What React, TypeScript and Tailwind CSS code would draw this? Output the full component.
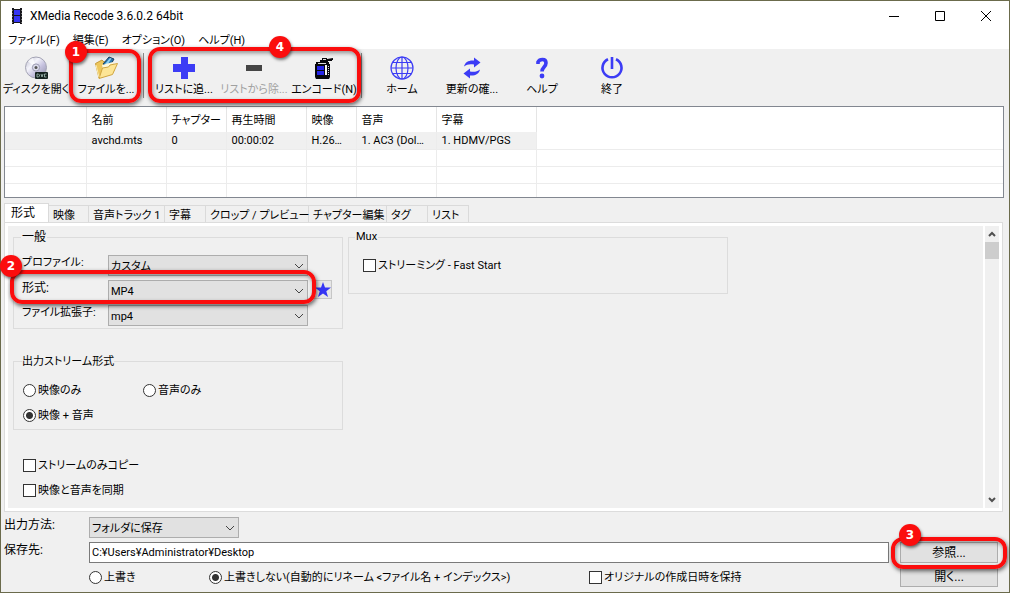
import { useState } from "react";
import type { ReactNode } from "react";

const COLUMNS = [
  { label: "", value: "" },
  { label: "名前", value: "avchd.mts" },
  { label: "チャプター", value: "0" },
  { label: "再生時間", value: "00:00:02" },
  { label: "映像", value: "H.26…" },
  { label: "音声", value: "1. AC3 (Dol…" },
  { label: "字幕", value: "1. HDMV/PGS" },
];

const TABS = [
  { label: "形式", width: "w-[45px]" },
  { label: "映像", width: "w-10" },
  { label: "音声トラック 1", width: "w-[76px]" },
  { label: "字幕", width: "w-[41px]" },
  { label: "クロップ / プレビュー", width: "w-[103px]" },
  { label: "チャプター編集", width: "w-[78px]" },
  { label: "タグ", width: "w-[41px]" },
  { label: "リスト", width: "w-[41px]" },
];

const MENU = ["ファイル(F)", "編集(E)", "オプション(O)", "ヘルプ(H)"];

/* ── Icons ── */
const FilmIcon = () => (
  <svg width="12" height="16" viewBox="0 0 12 16">
    <path d="M1 0h2v1h6V0h2v16H9v-1H3v1H1z" fill="#16161c" />
    <path d="M3 2h6v5H3zM3 8h6v6H3z" fill="#3434f4" />
    <path d="M1 2h1v1H1zM1 5h1v1H1zM1 8h1v1H1zM1 11h1v1H1zM1 14h1v1H1zM10 2h1v1h-1zM10 5h1v1h-1zM10 8h1v1h-1zM10 11h1v1h-1zM10 14h1v1h-1z" fill="#777" />
  </svg>
);

const DiscIcon = () => (
  <svg width="24" height="24" viewBox="0 0 24 24">
    <defs>
      <linearGradient id="disc" x1="0" y1="0" x2="1" y2="1">
        <stop offset="0" stopColor="#b9b9ca" />
        <stop offset="0.35" stopColor="#f4f4fb" />
        <stop offset="0.6" stopColor="#c6c2df" />
        <stop offset="1" stopColor="#8f8fa6" />
      </linearGradient>
    </defs>
    <circle cx="12" cy="11.5" r="10.5" fill="url(#disc)" stroke="#a3a3b4" />
    <path d="M12 11.5 4 5.500A10 10 0 0 1 9 2z" fill="#fff" opacity=".7" />
    <circle cx="12" cy="11.500" r="3.600" fill="#dcdcec" stroke="#9a9ab0" />
    <circle cx="12" cy="11.500" r="1.500" fill="#555" />
    <rect x="11" y="16" width="13" height="7" rx="1" fill="#15221f" />
    <path d="M13 18v3h1.500l1-1v-1l-1-1zM17 18l1 3 1-3M22.500 18h-2v3h2" fill="none" stroke="#a8c4bc" strokeWidth=".8" />
  </svg>
);

const FolderIcon = () => (
  <svg width="24" height="24" viewBox="0 0 24 24">
    <path d="M1.500 7.500 8 4l2 2 8-2 2 11-15 7z" fill="#edc65c" stroke="#c79a37" />
    <path d="m9 8 6-7 5 2-5 9z" fill="#2876ad" stroke="#173f62" />
    <path d="m11 8 5-6 1.500.6-4.500 7z" fill="#8fd0f4" />
    <path d="m8 9 11-3 1 8-10 4z" fill="#fff8db" />
    <path d="M5 22.500 8.500 12l6-1 1.500-2 7.500-1.500-5 11z" fill="#fde595" stroke="#d0a540" />
    <path d="m2 9 3 12" stroke="#fff0b4" />
  </svg>
);

const PlusIcon = () => (
  <svg width="24" height="24" viewBox="0 0 24 24">
    <path d="M9 1h7v7h7v8h-7v7H9v-7H1V8h8z" fill="#3c3cf5" />
  </svg>
);

const MinusIcon = () => (
  <svg width="24" height="24" viewBox="0 0 24 24">
    <path d="M4 9h16v6H4z" fill="#454545" />
  </svg>
);

const EncodeIcon = () => (
  <svg width="24" height="24" viewBox="0 0 24 24">
    <path d="M4 6h4V4h2V2h5v1l6-1v2h-1v1h-4v1h1v2h1v13l-1 2H4l-1-2V8h1z" fill="#08080c" />
    <path d="M11 3h3v1h-3zM6 7h8v1H6z" fill="#ddd" />
    <path d="M5 10h7v9H5z" fill="#2525e8" />
    <path d="M5 14h7v1H5z" fill="#08080c" />
    <path d="M13 9h2v10h-2z" fill="#f7f7f7" />
    <path d="M16 10h1v1h-1zM16 12h1v1h-1zM16 14h1v1h-1zM16 16h1v1h-1zM16 18h1v1h-1z" fill="#ddd" />
  </svg>
);

const GlobeIcon = () => (
  <svg width="24" height="24" viewBox="0 0 24 24" fill="none" stroke="#3c3cf5" strokeWidth="1.2">
    <circle cx="12" cy="12" r="11" />
    <ellipse cx="12" cy="12" rx="6" ry="11" />
    <path d="M12 1v22M1 12h22M3 6.500h18M3 17.500h18" />
  </svg>
);

const RefreshIcon = () => (
  <svg width="24" height="24" viewBox="0 0 24 24" fill="#3c3cf5">
    <path d="M4 10.500C5 6 9 4 14 4.500V1.500l6.500 5-6.500 5V8.500c-4-.8-7-.3-10 2z" />
    <path d="M20 13.500c-1 4.500-5 6.500-10 6v3l-6.500-5 6.500-5v3c4 .8 7 .3 10-2z" />
  </svg>
);

const HelpIcon = () => (
  <svg width="24" height="24" viewBox="0 0 24 24">
    <path d="M8 8V6c1-2 2.500-2.500 4.500-2.500C15 3.500 16 5 16 7c0 4-4 4-4 8.500" fill="none" stroke="#3c3cf5" strokeWidth="3.600" />
    <circle cx="12" cy="20" r="2.400" fill="#3c3cf5" />
  </svg>
);

const PowerIcon = () => (
  <svg width="24" height="24" viewBox="0 0 24 24" fill="none" stroke="#3c3cf5" strokeWidth="2.600">
    <path d="M8 3.200a9.500 9.500 0 1 0 8 0M12 1v12" />
  </svg>
);

const Chevron = ({ className }: { className: string }) => (
  <svg width="10" height="6" viewBox="0 0 10 6" className={className}>
    <path d="m1 1 4 4 4-4" fill="none" stroke="currentColor" />
  </svg>
);

const ScrollArrow = ({ className }: { className?: string }) => (
  <svg width="8" height="6" viewBox="0 0 8 6" className={className}>
    <path d="m1 1 3 3 3-3" fill="none" stroke="#505050" strokeWidth="2" />
  </svg>
);

/* ── Numbered red frame laid over the controls ── */
const Callout = ({ n, frame, badge }: { n: number; frame: string; badge: string }) => (
  <div className={`pointer-events-none absolute z-20 rounded-xl border-4 border-[#fb0d0d] shadow-[1px_2px_4px_rgba(0,0,0,0.6),inset_1px_2px_4px_rgba(0,0,0,0.4)] ${frame}`}>
    <span className={`absolute flex h-[22px] w-[22px] items-center justify-center rounded-full bg-[#fb0d0d] font-['DejaVu_Sans',sans-serif] text-xs font-bold text-white shadow-[1px_2px_3px_rgba(0,0,0,0.5)] ${badge}`}>
      {n}
    </span>
  </div>
);

const ToolButton = ({ label, disabled, children }: { label: string; disabled?: boolean; children: ReactNode }) => (
  <button
    type="button"
    disabled={disabled}
    className="flex w-[70px] flex-col items-center whitespace-nowrap pt-[7px] leading-5 disabled:text-[#a0a0a0]"
  >
    {children}
    <span>{label}</span>
  </button>
);

const Separator = () => (
  <div className="flex w-2 justify-start pb-2 pl-[2px] pt-1">
    <div className="w-px bg-[#8b8b8b]" />
  </div>
);

const Dropdown = ({ id, value, className }: { id: string; value: string; className?: string }) => (
  <div className={`relative ${className ?? ""}`}>
    <select
      id={id}
      defaultValue={value}
      className="block h-[21px] w-full appearance-none border border-[#adadad] bg-[#e1e1e1] pl-[2px] pt-[2px] leading-4"
    >
      <option>{value}</option>
    </select>
    <Chevron className="pointer-events-none absolute right-1 top-2 text-[#444]" />
  </div>
);

const Radio = ({ name, label, checked, className }: { name: string; label: string; checked?: boolean; className?: string }) => (
  <label className={`flex h-4 items-center gap-[2px] whitespace-nowrap ${className ?? ""}`}>
    <input
      type="radio"
      name={name}
      defaultChecked={checked}
      className="h-[13px] w-[13px] shrink-0 appearance-none rounded-full border border-[#333] bg-white checked:bg-[radial-gradient(circle,#333_0_3px,#fff_4px)]"
    />
    <span className="pt-[2px]">{label}</span>
  </label>
);

const Check = ({ label }: { label: string }) => (
  <label className="flex h-4 items-center gap-[2px] whitespace-nowrap">
    <input
      type="checkbox"
      className="h-[13px] w-[13px] shrink-0 appearance-none border border-[#333] bg-white checked:bg-[#333]"
    />
    <span className="pt-[2px]">{label}</span>
  </label>
);

const FileList = () => (
  <div className="ml-[3px] mr-[5px] h-[92px] overflow-hidden border border-[#828790] bg-white">
    <table className="w-full table-fixed border-collapse text-left">
      <colgroup>
        <col className="w-[81px]" />
        <col className="w-20" />
        <col className="w-[60px]" />
        <col className="w-20" />
        <col className="w-[50px]" />
        <col className="w-20" />
        <col className="w-[100px]" />
        <col />
      </colgroup>
      <thead>
        <tr className="h-[25px]">
          {COLUMNS.map((c) => (
            <th key={c.label} className="whitespace-nowrap border-r border-[#e5e5e5] pl-[5px] pt-[3px] font-normal">{c.label}</th>
          ))}
          <td />
        </tr>
      </thead>
      <tbody>
        <tr className="h-[17px] leading-[14px]">
          {COLUMNS.map((c) => (
            <td key={c.label} className="overflow-hidden whitespace-nowrap border-r border-b border-[#ececec] bg-[#f0f0f0] pl-[5px] pt-[2px]">{c.value}</td>
          ))}
          <td className="border-b border-[#ececec]" />
        </tr>
        {[1, 2, 3].map((row) => (
          <tr key={row} className="h-[17px]">
            {COLUMNS.map((c) => (
              <td key={c.label} className="border-r border-b border-[#ececec]" />
            ))}
            <td className="border-b border-[#ececec]" />
          </tr>
        ))}
      </tbody>
    </table>
  </div>
);

const FormatPanel = () => (
  <div className="flex min-w-0 flex-1 items-start gap-[5px] pl-[5px] pt-[3px]">
    <div className="w-[330px] shrink-0">
      <fieldset className="border border-[#dcdcdc] px-2 pb-[2px]">
        <legend className="-ml-px px-[1px] text-xs leading-4">一般</legend>
        <div className="grid grid-cols-[86px_200px_1fr] gap-y-1 pt-[10px]">
          <label htmlFor="profile" className="leading-4">プロファイル:</label>
          <Dropdown id="profile" value="カスタム" />
          <span />
          <div className="relative col-span-3 grid grid-cols-subgrid">
            <label htmlFor="format" className="text-xs leading-4">形式:</label>
            <Dropdown id="format" value="MP4" />
            <button type="button" aria-label="お気に入り" className="ml-[6px] flex h-[19px] w-[18px] items-center justify-center border border-[#c6c6c6] bg-[#e6e6e6]">
              <svg width="16" height="16" viewBox="0 0 16 16">
                <path d="m8 0 2 5.500h6l-4.700 3.700L13 15l-5-3.500L3 15l1.700-5.800L0 5.500h6z" fill="#3434f4" />
              </svg>
            </button>
            <Callout n={2} frame="-top-[10px] -bottom-[3px] -left-3 w-[306px]" badge="-left-[14px] -top-[19px]" />
          </div>
          <label htmlFor="extension" className="leading-4">ファイル拡張子:</label>
          <Dropdown id="extension" value="mp4" />
        </div>
      </fieldset>

      <fieldset className="mt-6 border border-[#dcdcdc] px-[9px] pb-[6px]">
        <legend className="-ml-px pt-px leading-4">出力ストリーム形式</legend>
        <div className="grid grid-cols-[120px_1fr] gap-y-[9px] pt-3 leading-4">
          <Radio name="stream" label="映像のみ" />
          <Radio name="stream" label="音声のみ" />
          <Radio name="stream" label="映像 + 音声" checked />
        </div>
      </fieldset>

      <div className="mt-[27px] flex flex-col gap-[9px] pl-[10px] leading-4">
        <Check label="ストリームのみコピー" />
        <Check label="映像と音声を同期" />
      </div>
    </div>

    <fieldset className="w-[380px] border border-[#dcdcdc] px-[14px] pb-5">
      <legend className="-ml-2 px-[1px] leading-4">Mux</legend>
      <div className="pt-3 leading-4">
        <Check label="ストリーミング - Fast Start" />
      </div>
    </fieldset>
  </div>
);

const OutputBar = () => (
  <div className="grid grid-cols-[85px_1fr_98px] gap-y-1 pb-[5px] pl-[3px] pr-[11px] pt-[6px] leading-4">
    <label htmlFor="output" className="text-xs">出力方法:</label>
    <Dropdown id="output" value="フォルダに保存" className="w-[150px]" />
    <span />

    <label htmlFor="folder" className="text-xs">保存先:</label>
    <input
      id="folder"
      type="text"
      defaultValue="C:¥Users¥Administrator¥Desktop"
      className="mr-[11px] h-[21px] min-w-0 border border-[#7a7a7a] bg-white px-[2px]"
    />
    <div className="relative">
      <button type="button" className="h-[21px] w-full border border-[#adadad] bg-[#e1e1e1] text-xs">参照...</button>
      <Callout n={3} frame="-top-[5px] -bottom-[6px] -left-[9px] -right-[9px]" badge="left-[4px] -top-[17px]" />
    </div>

    <span />
    <div className="flex items-center">
      <Radio name="overwrite" label="上書き" className="w-[120px]" />
      <Radio name="overwrite" label="上書きしない(自動的にリネーム <ファイル名 + インデックス>)" checked className="w-[380px]" />
      <Check label="オリジナルの作成日時を保持" />
    </div>
    <button type="button" className="h-5 border border-[#adadad] bg-[#e1e1e1] text-xs">開く...</button>
  </div>
);

export default function App() {
  const [tab, setTab] = useState(0);

  return (
    <div className="flex min-h-screen flex-col border border-[#6b6b4c] bg-[#f0f0f0] font-['Roboto','Noto_Sans_CJK_JP',sans-serif] text-[11px] text-black [font-feature-settings:'palt']">
      <header className="bg-white">
        <div className="flex h-[30px] items-center pl-[10px]">
          <FilmIcon />
          <h1 className="flex-1 pl-[7px] text-xs">XMedia Recode 3.6.0.2 64bit</h1>
          <button type="button" aria-label="最小化" className="flex w-[46px] justify-center">
            <svg width="10" height="10" viewBox="0 0 10 10"><path d="M0 5.500h10" stroke="#000" /></svg>
          </button>
          <button type="button" aria-label="最大化" className="flex w-[46px] justify-center">
            <svg width="10" height="10" viewBox="0 0 10 10"><path d="M.5.5h9v9h-9z" fill="none" stroke="#000" /></svg>
          </button>
          <button type="button" aria-label="閉じる" className="flex w-[46px] justify-center">
            <svg width="10" height="10" viewBox="0 0 10 10"><path d="m0 0 10 10M10 0 0 10" stroke="#000" /></svg>
          </button>
        </div>
        <nav className="flex h-[18px] items-center gap-[13px] pl-[7px] pt-[2px]">
          {MENU.map((item) => (
            <button key={item} type="button" className="leading-4">{item}</button>
          ))}
        </nav>
      </header>

      <div className="flex h-[57px]">
        <ToolButton label="ディスクを開く"><DiscIcon /></ToolButton>
        <div className="relative flex">
          <ToolButton label="ファイルを..."><FolderIcon /></ToolButton>
          <Callout n={1} frame="-left-[2px] right-0 top-0 bottom-[3px]" badge="-left-[8px] -top-[12px]" />
        </div>
        <Separator />
        <div className="relative flex">
          <ToolButton label="リストに追..."><PlusIcon /></ToolButton>
          <ToolButton label="リストから除..." disabled><MinusIcon /></ToolButton>
          <ToolButton label="エンコード(N)"><EncodeIcon /></ToolButton>
          <Callout n={4} frame="-left-[1px] -right-[2px] -top-[2px] bottom-[3px]" badge="left-[117px] -top-[15px]" />
        </div>
        <Separator />
        <ToolButton label="ホーム"><GlobeIcon /></ToolButton>
        <ToolButton label="更新の確..."><RefreshIcon /></ToolButton>
        <ToolButton label="ヘルプ"><HelpIcon /></ToolButton>
        <ToolButton label="終了"><PowerIcon /></ToolButton>
      </div>

      <FileList />

      <div role="tablist" className="flex h-[25px] items-end pl-[3px] pt-[5px]">
        {TABS.map(({ label, width }, i) => (
          <button
            key={label}
            type="button"
            role="tab"
            aria-selected={tab === i}
            onClick={() => setTab(i)}
            className={`shrink-0 whitespace-nowrap border-r border-t border-[#dadada] text-left leading-4 ${width} ${
              tab === i ? "h-5 border-l bg-white pb-[2px] pl-[6px] text-xs" : "h-[18px] pl-1 pt-[2px]"
            }`}
          >
            {label}
          </button>
        ))}
      </div>

      <div className="ml-1 mr-[7px] flex flex-1 border-[3px] border-white outline outline-[#dcdcdc]">
        <FormatPanel />
        <div className="flex w-4 flex-col items-center border-l-2 border-white">
          <button type="button" aria-label="上へ" className="flex h-4 items-center"><ScrollArrow className="rotate-180" /></button>
          <div className="h-[17px] w-full bg-[#cdcdcd]" />
          <button type="button" aria-label="下へ" className="mt-auto flex h-4 items-center"><ScrollArrow /></button>
        </div>
      </div>

      <OutputBar />
    </div>
  );
}
